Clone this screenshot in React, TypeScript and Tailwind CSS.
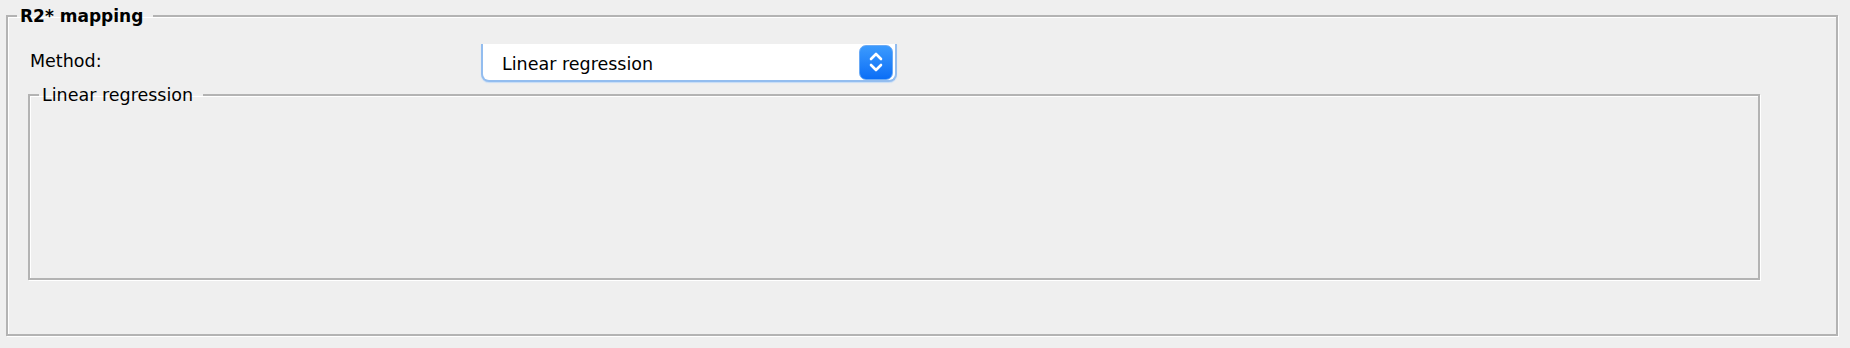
import { useState } from 'react';

const FONT = "font-['DejaVu_Sans',sans-serif]";

function Chevrons() {
  return (
    <svg width="16" height="24" viewBox="0 0 16 24" fill="none">
      <path d="M3 9 L8 4 L13 9" stroke="white" strokeWidth="2.6" strokeLinecap="round" strokeLinejoin="round" />
      <path d="M3 15 L8 20 L13 15" stroke="white" strokeWidth="2.6" strokeLinecap="round" strokeLinejoin="round" />
    </svg>
  );
}

function MethodSelect({ value }: { value: string }) {
  return (
    <div className="flex h-[38px] w-[416px] items-center justify-between rounded-b-[8px] border-2 border-t-0 border-[#93bdef] bg-white pl-[19px] pr-[2px] shadow-[0_1px_1px_#c5dcf7]">
      <span className="mt-[4px] text-[17.5px] leading-[20px] text-black">{value}</span>
      <div className="flex h-[35px] w-[34px] items-center justify-center rounded-[7px] border border-[#6aaaf6] bg-gradient-to-b from-[#3b9afd] to-[#0a6ef6]">
        <Chevrons />
      </div>
    </div>
  );
}

export default function App() {
  const [method] = useState('Linear regression');

  return (
    <div className={`h-[348px] w-[1850px] bg-[#efefef] pl-[6px] pt-[6px] ${FONT}`}>
      <fieldset className="h-[330px] w-[1832px] border-2 border-[#b3b3b3] shadow-[inset_1px_1px_0_#fff,1px_1px_0_#fff]">
        <legend className="ml-[9px] pl-[3px] pr-[10px] text-[17px] leading-[20px] font-bold text-black">R2* mapping</legend>

        <div className="mt-[18px] grid grid-cols-[451px_416px] items-start pl-[22px]">
          <span className="mt-[7px] text-[17.5px] leading-[20px] text-black">Method:</span>
          <MethodSelect value={method} />
        </div>

        <fieldset className="ml-[20px] mt-[3px] h-[195px] w-[1732px] border-2 border-[#b3b3b3] shadow-[inset_1px_1px_0_#fff,1px_1px_0_#fff]">
          <legend className="ml-[9px] pl-[3px] pr-[10px] text-[17.5px] leading-[20px] text-black">{method}</legend>
        </fieldset>
      </fieldset>
    </div>
  );
}
